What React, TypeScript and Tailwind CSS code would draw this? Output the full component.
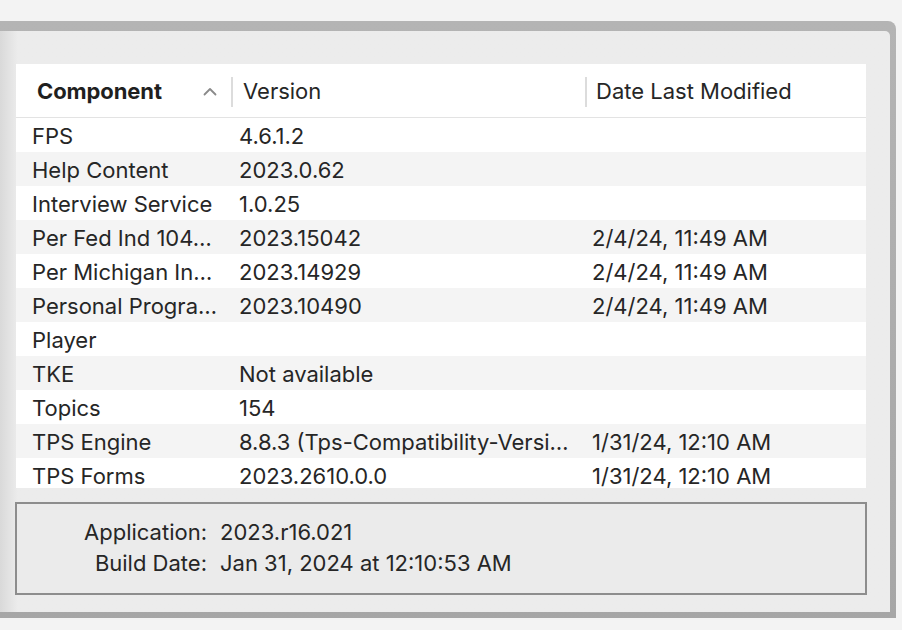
import React from "react";

const rows = [
  { name: "FPS", version: "4.6.1.2", date: "" },
  { name: "Help Content", version: "2023.0.62", date: "" },
  { name: "Interview Service", version: "1.0.25", date: "" },
  { name: "Per Fed Ind 104…", version: "2023.15042", date: "2/4/24, 11:49 AM" },
  { name: "Per Michigan In…", version: "2023.14929", date: "2/4/24, 11:49 AM" },
  { name: "Personal Progra…", version: "2023.10490", date: "2/4/24, 11:49 AM" },
  { name: "Player", version: "", date: "" },
  { name: "TKE", version: "Not available", date: "" },
  { name: "Topics", version: "154", date: "" },
  { name: "TPS Engine", version: "8.8.3 (Tps-Compatibility-Versi…", date: "1/31/24, 12:10 AM" },
  { name: "TPS Forms", version: "2023.2610.0.0", date: "1/31/24, 12:10 AM" },
];

export default function App() {
  return (
    <div
      className="w-[902px] h-[630px] overflow-hidden bg-[#f3f3f3] pt-[21px] text-[#262626]"
      style={{ fontFamily: "Inter, 'Noto Sans', sans-serif" }}
    >
      {/* Window frame */}
      <div className="w-[896px] h-[597px] rounded-tr-[8px] bg-gradient-to-b from-[#b4b4b4] to-[#a6a6a6] pt-[10px] pr-[6px] pb-[6px]">
        <div className="h-full rounded-tr-[5px] bg-gradient-to-r from-[#d9d9d9] via-[#ececec] via-[2%] to-[#ececec] pt-[33px] pl-[16px]">
          {/* Table */}
          <div className="w-[850px] h-[424px] bg-white overflow-hidden">
            <div className="flex h-[54px] items-center border-b border-[#e3e3e3] text-[22px] pt-[2px]">
              <div className="w-[215px] flex items-center pl-[21px] pr-[14px]">
                <span className="font-bold text-[#1f1f1f] tracking-[-0.1px]">Component</span>
                <svg className="ml-auto" width="14" height="9" viewBox="0 0 14 9" fill="none">
                  <path d="M1.5 7.5 L7 2 L12.5 7.5" stroke="#8a8a8a" strokeWidth="1.8" strokeLinecap="round" strokeLinejoin="round" />
                </svg>
              </div>
              <div className="w-[354px] h-[30px] flex items-center border-l-2 border-[#dcdcdc] pl-[10px]">Version</div>
              <div className="flex-1 h-[30px] flex items-center border-l-2 border-[#dcdcdc] pl-[9px]">Date Last Modified</div>
            </div>
            {rows.map((r, i) => (
              <div
                key={r.name}
                className={`flex h-[34px] items-center text-[22px] pt-[2px] ${i % 2 === 1 ? "bg-[#f4f4f4]" : "bg-white"}`}
              >
                <div className="w-[215px] pl-[16px] whitespace-nowrap">{r.name}</div>
                <div className="w-[354px] pl-[8px] whitespace-nowrap">{r.version}</div>
                <div className="flex-1 pl-[7px] whitespace-nowrap">{r.date}</div>
              </div>
            ))}
          </div>

          {/* Build info */}
          <div className="mt-[14px] -ml-[1px] w-[852px] h-[93px] border-2 border-[#8d8d8d] bg-[#ebebeb] pt-[13px] text-[22px]">
            <div className="flex h-[31px] items-center">
              <div className="w-[190px] text-right">Application:</div>
              <div className="pl-[13px]">2023.r16.021</div>
            </div>
            <div className="flex h-[31px] items-center">
              <div className="w-[190px] text-right">Build Date:</div>
              <div className="pl-[13px]">Jan 31, 2024 at 12:10:53 AM</div>
            </div>
          </div>
        </div>
      </div>
    </div>
  );
}
